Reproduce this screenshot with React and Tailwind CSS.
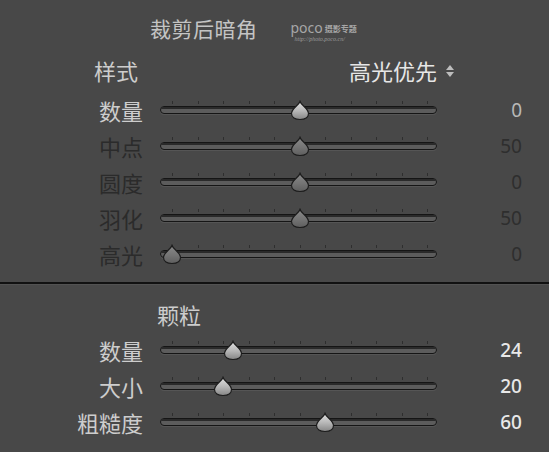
const CJK = { fontFamily: '"Noto Sans CJK SC", "Noto Sans", sans-serif' };
const NUM = { fontFamily: '"Noto Sans", "Open Sans", sans-serif' };

const TICKS = [0, 1, 2, 3, 4, 5, 6, 7, 8, 9, 10];

function Thumb({ enabled }) {
  const id = enabled ? "thumbOn" : "thumbOff";
  return (
    <svg width="20" height="21" viewBox="0 0 20 21" className="block">
      <defs>
        <linearGradient id={id} x1="0" y1="0" x2="0" y2="1">
          <stop offset="0" stopColor={enabled ? "#e2e2e2" : "#8a8a8a"} />
          <stop offset="0.55" stopColor={enabled ? "#b4b4b4" : "#747474"} />
          <stop offset="1" stopColor={enabled ? "#858585" : "#5e5e5e"} />
        </linearGradient>
      </defs>
      <path
        d="M10 1.5 C11 5 18.5 8.5 18.5 13.5 C18.5 17.5 15 19.5 10 19.5 C5 19.5 1.5 17.5 1.5 13.5 C1.5 8.5 9 5 10 1.5 Z"
        fill={`url(#${id})`}
        stroke="#1c1c1c"
        strokeWidth="1.2"
      />
    </svg>
  );
}

function Slider({ fraction, enabled }) {
  const x = 12 + fraction * 255;
  return (
    <div className="relative w-[277px] h-[36px]">
      {TICKS.map((i) => (
        <div
          key={i}
          className="absolute top-[9px] w-px h-[3px] bg-[#2e2e2e]"
          style={{ left: 12 + i * 25.5 }}
        />
      ))}
      <div className="absolute left-0 right-0 top-[14px] h-[8px] rounded-full border border-[#151515] bg-[#5c5c5c] shadow-[0_1px_0_#555555]">
        <div className="h-[2px] bg-[#2a2a2a] rounded-full" />
      </div>
      <div className="absolute top-[8px]" style={{ left: x - 10 }}>
        <Thumb enabled={enabled} />
      </div>
    </div>
  );
}

function Row({ label, value, fraction, labelOn, valueOn, thumbOn, bright }) {
  return (
    <div className="flex items-center h-[36px]">
      <div
        className={`w-[144px] text-right text-[22px] leading-none pr-[1px] ${labelOn ? "text-[#cdcdcd]" : "text-[#2b2b2b]"}`}
        style={CJK}
      >
        {label}
      </div>
      <div className="ml-[16px]">
        <Slider fraction={fraction} enabled={thumbOn} />
      </div>
      <div
        className={`w-[85px] text-right text-[19px] leading-none ${bright ? "text-[#e8e8e8] font-medium" : valueOn ? "text-[#b8b8b8]" : "text-[#2e2e2e]"}`}
        style={NUM}
      >
        {value}
      </div>
    </div>
  );
}

export default function App() {
  return (
    <div className="w-[549px] h-[452px] bg-[#484848] overflow-hidden flex flex-col">
      {/* Header */}
      <div className="mt-[8px] h-[40px] flex items-center pl-[150px]">
        <span className="text-[21px] leading-none text-[#c4c4c4] tracking-[0.5px]" style={CJK}>
          裁剪后暗角
        </span>
        <div className="ml-[33px] mt-[6px] flex flex-col gap-[1px] text-[#a6a6a6]">
          <div className="flex items-end">
            <span className="text-[14px] leading-none" style={NUM}>poco</span>
            <span className="ml-[2px] mb-[2px] text-[8px] font-bold leading-none" style={CJK}>摄影专题</span>
          </div>
          <span
            className="ml-[4px] text-[6px] italic leading-none text-[#9a9a9a]"
            style={{ fontFamily: '"Liberation Serif", serif' }}
          >
            http://photo.poco.cn/
          </span>
        </div>
      </div>

      <div className="h-[44px] flex items-center">
        <div className="w-[138px] text-right text-[22px] leading-none text-[#cdcdcd]" style={CJK}>
          样式
        </div>
        <div className="w-[299px] text-right text-[22px] leading-none text-[#e6e6e6]" style={CJK}>
          高光优先
        </div>
        <svg width="10" height="14" viewBox="0 0 10 14" className="ml-[8px] mt-[2px]">
          <path d="M5 1 L9 6 L1 6 Z" fill="#bdbdbd" />
          <path d="M1 8 L9 8 L5 13 Z" fill="#bdbdbd" />
        </svg>
      </div>

      <Row label="数量" value="0" fraction={0.5} labelOn valueOn thumbOn />
      <Row label="中点" value="50" fraction={0.5} />
      <Row label="圆度" value="0" fraction={0.5} />
      <Row label="羽化" value="50" fraction={0.5} />
      <Row label="高光" value="0" fraction={0} />

      <div className="mt-[10px] h-[2px] bg-[#111111]" />
      <div className="h-px bg-[#525252]" />

      <div className="mt-[11px] h-[36px] flex items-center pl-[157px]">
        <span className="text-[22px] leading-none text-[#cdcdcd]" style={CJK}>颗粒</span>
      </div>

      <Row label="数量" value="24" fraction={0.24} labelOn thumbOn bright />
      <Row label="大小" value="20" fraction={0.2} labelOn thumbOn bright />
      <Row label="粗糙度" value="60" fraction={0.6} labelOn thumbOn bright />
    </div>
  );
}
